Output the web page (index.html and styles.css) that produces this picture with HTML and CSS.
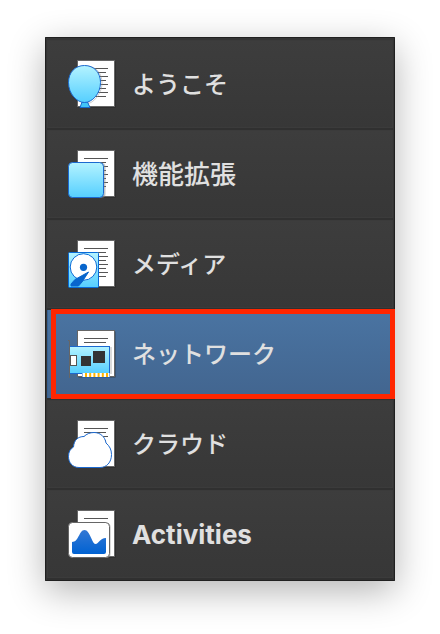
FILE: index.html
```html
<!DOCTYPE html>
<html lang="ja">
<head>
<meta charset="utf-8">
<meta name="viewport" content="width=device-width, initial-scale=1">
<title>カテゴリ</title>
<link rel="stylesheet" href="styles.css">
</head>
<body>
<svg class="defs" width="0" height="0" aria-hidden="true">
  <defs>
    <linearGradient id="sky" x1="0" y1="0" x2="0" y2="1">
      <stop offset="0" stop-color="#b4f3ff"/>
      <stop offset="1" stop-color="#55cfff"/>
    </linearGradient>
    <linearGradient id="deep" x1="0" y1="0" x2="0" y2="1">
      <stop offset="0" stop-color="#3478d4"/>
      <stop offset="1" stop-color="#0062d2"/>
    </linearGradient>
    <g id="page">
      <rect x="12.5" y="3.5" width="37" height="46" fill="#242424"/>
      <rect x="11.5" y="2.5" width="37" height="46" fill="#fff" stroke="#666"/>
      <path d="M18 10.5h24M18 14.5h22M18 18.5h24M18 22.5h22M18 26.5h24M18 30.5h22M18 34.5h24M18 38.5h22" stroke="#555" fill="none"/>
    </g>
    <g id="form">
      <rect x="12.5" y="3.5" width="37" height="46" fill="#242424" opacity=".6"/>
      <rect x="11.5" y="2.5" width="37" height="46" fill="#fff" stroke="#666"/>
      <path d="M18 10.5h24M18 14.500h22" stroke="#555" fill="none"/>
    </g>
  </defs>
</svg>
<nav class="panel">
  <a class="row" href="#welcome">
    <svg class="icon" viewBox="0 0 52 52" aria-hidden="true">
      <use href="#page"/>
      <path d="M20 8c10 0 16 7 16 17 0 9-6 17-12 20h-7" fill="none" stroke="#999" stroke-opacity=".5"/>
      <path d="M16 44h5.500l2.500 5.500H14z" fill="#41c4f8" stroke="#1767cd"/>
      <path d="M18.500 7.500C28 7.500 34.500 14.500 34.500 24.500 34.500 36 26 44.500 18.500 44.500S2.500 36 2.500 24.500C2.500 14.500 9 7.500 18.500 7.500z" fill="url(#sky)" stroke="#1b69d0"/>
    </svg>
    <span class="label kana">ようこそ</span>
  </a>
  <a class="row" href="#extensions">
    <svg class="icon" viewBox="0 0 52 52" aria-hidden="true">
      <use href="#page"/>
      <rect x="3.500" y="15" width="36" height="35" rx="4" fill="#888" opacity=".5"/>
      <rect x="2.500" y="14.500" width="35" height="35" rx="4" fill="url(#sky)" stroke="#1b69d0"/>
    </svg>
    <span class="label">機能拡張</span>
  </a>
  <a class="row" href="#media">
    <svg class="icon" viewBox="0 0 52 52" aria-hidden="true">
      <use href="#page"/>
      <rect x="2.500" y="14.500" width="30" height="35" rx="1" fill="url(#sky)" stroke="#086bd8"/>
      <circle cx="17.500" cy="29" r="13.300" fill="#fff" stroke="#086bd8"/>
      <circle cx="17.500" cy="29.300" r="3.600" fill="#0865cc"/>
      <path d="M22.500 34L9 41.500 5 46v2h7.500L16 44z" fill="#0865cc" stroke="#0865cc" stroke-linejoin="round"/>
    </svg>
    <span class="label kana">メディア</span>
  </a>
  <a class="row selected" href="#network" aria-current="page">
    <svg class="icon" viewBox="0 0 52 52" aria-hidden="true">
      <use href="#form"/>
      <path d="M45 19v27" stroke="#888" stroke-opacity=".6"/>
      <rect x="3.500" y="18.500" width="40" height="27" fill="url(#sky)" stroke="#1b69d0"/>
      <path d="M2 12.500h1.500V50" fill="none" stroke="#666"/>
      <rect x="4.500" y="27.500" width="6" height="10" fill="#fff" stroke="#555"/>
      <path d="M15 28h10v10H15zM27 23h12v12H27z" fill="#333"/>
      <path d="M16 45h28v4H16z" fill="#fff"/>
      <path d="M16.500 45v4.500h27V45" fill="none" stroke="#1b69d0" stroke-opacity=".5"/>
      <path d="M19 45h2v4h-2zM23.200 45h2v4h-2zM27.400 45h2v4h-2zM31.600 45h2v4h-2zM35.800 45h2v4h-2zM40 45h2v4h-2z" fill="#ffb400"/>
    </svg>
    <span class="label kana">ネットワーク</span>
  </a>
  <a class="row" href="#cloud">
    <svg class="icon" viewBox="0 0 52 52" aria-hidden="true">
      <use href="#page"/>
      <path d="M13 49.500C6 49.500 2.500 44 2.500 38.500 2.500 33.500 4.500 31 7.500 29 8 22 12 18.500 18 18.500 20.500 16 24 14.500 28 14.500c6 0 11 4 12 10.500 3.500 3 5.500 6.500 5.500 11.500 0 8-5 13-11.500 13z" fill="#fff" stroke="#1b69d0"/>
    </svg>
    <span class="label kana">クラウド</span>
  </a>
  <a class="row" href="#activities">
    <svg class="icon" viewBox="0 0 52 52" aria-hidden="true">
      <use href="#page"/>
      <rect x="3.500" y="15" width="41" height="35" rx="4" fill="#888" opacity=".6"/>
      <rect x="2.500" y="14.500" width="41" height="35" rx="4" fill="#fff" stroke="#666"/>
      <path d="M6 34c7 0 7-12 12.500-12S26 36 29.500 36c3.500 0 4-6 10.500-6v14q0 2-2 2H8q-2 0-2-2z" fill="url(#deep)"/>
    </svg>
    <span class="label strong">Activities</span>
  </a>
</nav>
</body>
</html>
```
FILE: styles.css
```css
* {
  box-sizing: border-box;
}

body {
  margin: 0;
  padding: 37px 45px 53px;
  background: #fff;
  font-family: Inter, "Noto Sans CJK JP", sans-serif;
}

.defs {
  position: absolute;
}

.panel {
  display: flex;
  flex-direction: column;
  padding: 3px 2px 1px;
  border-radius: 1px;
  background: #343434;
  box-shadow: inset 0 0 0 1px #202020, 0 10px 36px rgba(0, 0, 0, 0.3);
}

.row {
  position: relative;
  display: flex;
  align-items: center;
  gap: 14px;
  height: 90px;
  padding: 0 19px;
  border-bottom: 2px solid #303030;
  background: linear-gradient(#3d3d3d, #373737);
  box-shadow: inset 0 0 0 1px #3b3b3b;
  color: #e0e0e0;
  text-decoration: none;
}

.row:last-child {
  border-bottom-color: #303030;
}

.icon {
  flex: none;
  width: 52px;
  height: 52px;
}

.label {
  padding-top: 2px;
  font-size: 26px;
  font-weight: 500;
  line-height: 36px;
  white-space: nowrap;
}

.kana {
  font-size: 24px;
}

.strong {
  font-weight: 700;
}

.selected {
  background: linear-gradient(#4a74a2, #42658f);
  box-shadow: inset 1px 0 0 #355f91;
}

/* Highlight frame over the chosen row */
.selected::after {
  content: "";
  position: absolute;
  inset: -1px -2px -1px 4px;
  border: 5px solid #ff2600;
}
```
